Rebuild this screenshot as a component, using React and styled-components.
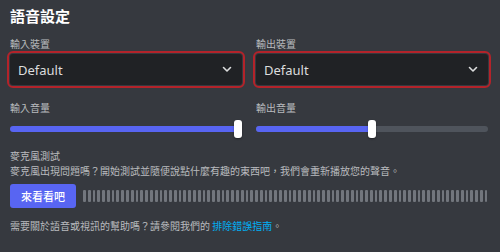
import React from 'react';
import styled, { createGlobalStyle } from 'styled-components';

const GlobalStyle = createGlobalStyle`
  html, body {
    margin: 0;
    padding: 0;
    background: #36393f;
  }
  body {
    font-family: "Noto Sans", "Noto Sans CJK TC", sans-serif;
  }
`;

const Page = styled.div`
  width: 500px;
  height: 252px;
  box-sizing: border-box;
  padding: 6px 12px 0 10px;
  background: #36393f;
  overflow: hidden;
`;

const Title = styled.div`
  font-family: "Noto Sans CJK TC", sans-serif;
  font-size: 15px;
  font-weight: 700;
  line-height: 20px;
  color: #ffffff;
`;

const Columns = styled.div`
  display: grid;
  grid-template-columns: 1fr 1fr;
  column-gap: 14px;
  margin-top: ${p => p.$top || 0}px;
`;

const Label = styled.div`
  font-family: "Noto Sans CJK TC", sans-serif;
  font-size: 10px;
  line-height: 14px;
  color: #b9bbbe;
  margin-top: ${p => p.$top || 0}px;
`;

const Select = styled.div`
  display: flex;
  align-items: center;
  justify-content: space-between;
  height: 31px;
  box-sizing: border-box;
  margin-top: 3px;
  padding: 0 10px 0 8px;
  background: #202225;
  border-radius: 3px;
  outline: 2px solid #b3232a;
  outline-offset: 1px;
  color: #dcddde;
  font-size: 13px;
`;

const Slider = styled.div`
  position: relative;
  height: 18px;
  margin-top: 5px;
  display: flex;
  align-items: center;
`;

const Track = styled.div`
  width: 100%;
  height: 6px;
  border-radius: 3px;
  background: #4f545c;
  overflow: hidden;
`;

const Fill = styled.div`
  height: 100%;
  background: #5865f2;
`;

const Thumb = styled.div`
  position: absolute;
  top: 0;
  width: 8px;
  height: 18px;
  border-radius: 3px;
  background: #ffffff;
  box-shadow: 0 1px 2px rgba(0, 0, 0, 0.4);
`;

const Text = styled.div`
  font-family: "Noto Sans CJK TC", sans-serif;
  font-size: 10px;
  line-height: 14px;
  color: #b9bbbe;
  margin-top: ${p => p.$top || 0}px;
`;

const TestRow = styled.div`
  display: flex;
  align-items: center;
  gap: 7px;
  margin-top: 6px;
`;

const Button = styled.button`
  width: 66px;
  height: 24px;
  border: none;
  border-radius: 3px;
  background: #5865f2;
  color: #ffffff;
  font-family: "Noto Sans CJK TC", sans-serif;
  font-size: 11px;
  font-weight: 500;
  padding: 0;
  flex-shrink: 0;
`;

const Meter = styled.div`
  flex: 1;
  display: flex;
  gap: 2px;
  height: 12px;
`;

const Bar = styled.div`
  flex: 1;
  background: #72767d;
  border-radius: 1px;
`;

const Link = styled.span`
  color: #00aff4;
`;

function Chevron() {
  return (
    <svg width="10" height="7" viewBox="0 0 10 7">
      <path d="M1.5 1.5 L5 5 L8.5 1.5" fill="none" stroke="#dcddde" strokeWidth="1.6" strokeLinecap="round" strokeLinejoin="round" />
    </svg>
  );
}

function VolumeSlider({ value }) {
  return (
    <Slider>
      <Track>
        <Fill style={{ width: `${value * 100}%` }} />
      </Track>
      <Thumb style={{ left: `calc(${value} * (100% - 8px))` }} />
    </Slider>
  );
}

export default function App() {
  const bars = Array.from({ length: 85 });
  return (
    <Page>
      <GlobalStyle />
      <Title>語音設定</Title>
      <Columns $top={11}>
        <div>
          <Label>輸入裝置</Label>
          <Select>
            <span>Default</span>
            <Chevron />
          </Select>
          <Label $top={16}>輸入音量</Label>
          <VolumeSlider value={1} />
        </div>
        <div>
          <Label>輸出裝置</Label>
          <Select>
            <span>Default</span>
            <Chevron />
          </Select>
          <Label $top={16}>輸出音量</Label>
          <VolumeSlider value={0.5} />
        </div>
      </Columns>
      <Text $top={11}>麥克風測試</Text>
      <Text $top={1}>麥克風出現問題嗎？開始測試並隨便說點什麼有趣的東西吧，我們會重新播放您的聲音。</Text>
      <TestRow>
        <Button>來看看吧</Button>
        <Meter>
          {bars.map((_, i) => (
            <Bar key={i} />
          ))}
        </Meter>
      </TestRow>
      <Text $top={11}>
        需要關於語音或視訊的幫助嗎？請參閱我們的 <Link>排除錯誤指南</Link>。
      </Text>
    </Page>
  );
}
